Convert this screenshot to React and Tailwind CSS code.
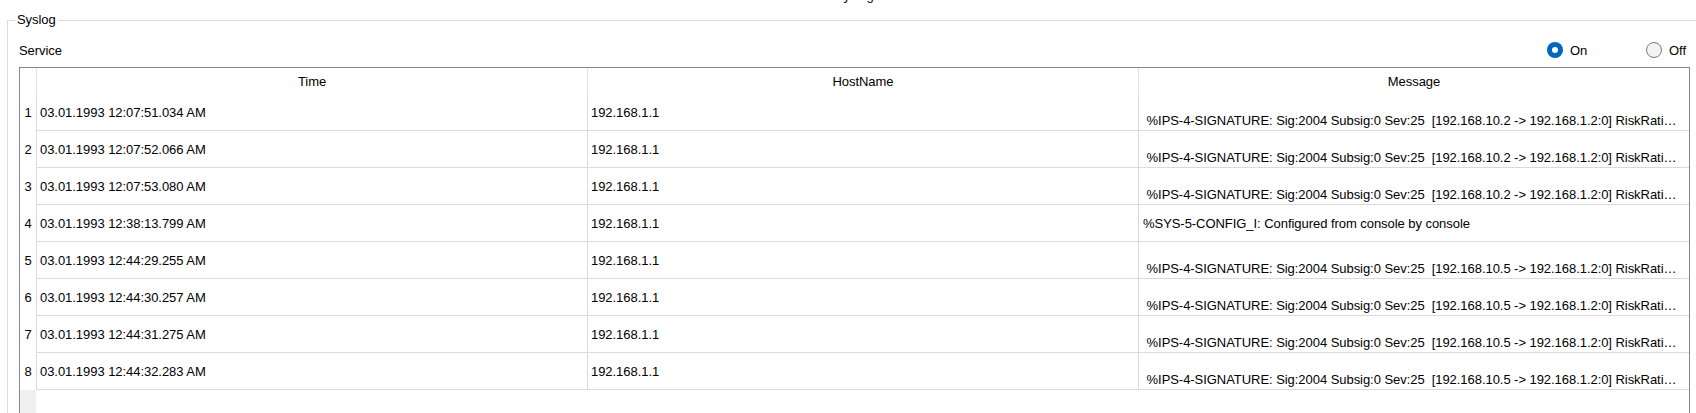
const IPS2 = " %IPS-4-SIGNATURE: Sig:2004 Subsig:0 Sev:25  [192.168.10.2 -> 192.168.1.2:0] RiskRating:25";
const IPS5 = " %IPS-4-SIGNATURE: Sig:2004 Subsig:0 Sev:25  [192.168.10.5 -> 192.168.1.2:0] RiskRating:25";
const SYS = "%SYS-5-CONFIG_I: Configured from console by console";

const rows = [
  { t: "03.01.1993 12:07:51.034 AM", m: IPS2, low: true },
  { t: "03.01.1993 12:07:52.066 AM", m: IPS2, low: true },
  { t: "03.01.1993 12:07:53.080 AM", m: IPS2, low: true },
  { t: "03.01.1993 12:38:13.799 AM", m: SYS, low: false },
  { t: "03.01.1993 12:44:29.255 AM", m: IPS5, low: true },
  { t: "03.01.1993 12:44:30.257 AM", m: IPS5, low: true },
  { t: "03.01.1993 12:44:31.275 AM", m: IPS5, low: true },
  { t: "03.01.1993 12:44:32.283 AM", m: IPS5, low: true },
];

export default function App() {
  return (
    <div className="w-[1696px] h-[413px] overflow-hidden bg-white text-black font-['Liberation_Sans',Arial,sans-serif] text-[13px] leading-[15px] tracking-[-0.05px]">
      <div className="h-[3px] overflow-hidden flex items-end">
        <span className="ml-[835px] leading-[14px]">Syslog</span>
      </div>
      <fieldset className="mt-[9px] ml-[7px] w-[1720px] h-[420px] border border-[#dcdcdc]">
        <legend className="ml-[7px] px-[2px] leading-[16px]">Syslog</legend>
        <div className="mt-[12px] ml-[11px] w-[1671px] h-[20px] flex items-center justify-between">
          <span>Service</span>
          <div className="flex items-center pr-[4px]">
            <label className="w-[99px] flex items-center gap-[7px]">
              <span className="w-4 h-4 rounded-full bg-[#0067c0] flex items-center justify-center">
                <span className="w-[6px] h-[6px] rounded-full bg-white" />
              </span>
              <span>On</span>
            </label>
            <label className="flex items-center gap-[7px]">
              <span className="w-4 h-4 rounded-full border border-[#777777] bg-[#f3f3f3]" />
              <span>Off</span>
            </label>
          </div>
        </div>
        <div className="mt-[7px] ml-[11px] w-[1671px] h-[360px] border border-[#828790] flex flex-col">
          <div className="grid grid-cols-[17px_551px_551px_550px] h-[26px] shrink-0">
            <div className="border-r border-[#e3e3e3]" />
            <div className="border-r border-[#e3e3e3] flex items-center justify-center">Time</div>
            <div className="border-r border-[#e3e3e3] flex items-center justify-center">HostName</div>
            <div className="flex items-center justify-center">Message</div>
          </div>
          {rows.map((r, i) => (
            <div key={i} className="grid grid-cols-[17px_551px_551px_550px] h-[37px] shrink-0">
              <div className="border-r border-[#dadada] flex items-center justify-center">{i + 1}</div>
              <div className="border-r border-b border-[#dadada] flex items-center pl-[3px]">{r.t}</div>
              <div className="border-r border-b border-[#dadada] flex items-center pl-[3px]">192.168.1.1</div>
              <div className={"border-b border-[#dadada] flex items-center pl-[4px] pr-[6px] min-w-0 " + (r.low ? "pt-[16px]" : "")}>
                <span className="block w-full overflow-hidden whitespace-pre text-ellipsis">{r.m}</span>
              </div>
            </div>
          ))}
          <div className="flex-1 flex">
            <div className="w-[16px] bg-[#f0f0f0]" />
          </div>
        </div>
      </fieldset>
    </div>
  );
}
